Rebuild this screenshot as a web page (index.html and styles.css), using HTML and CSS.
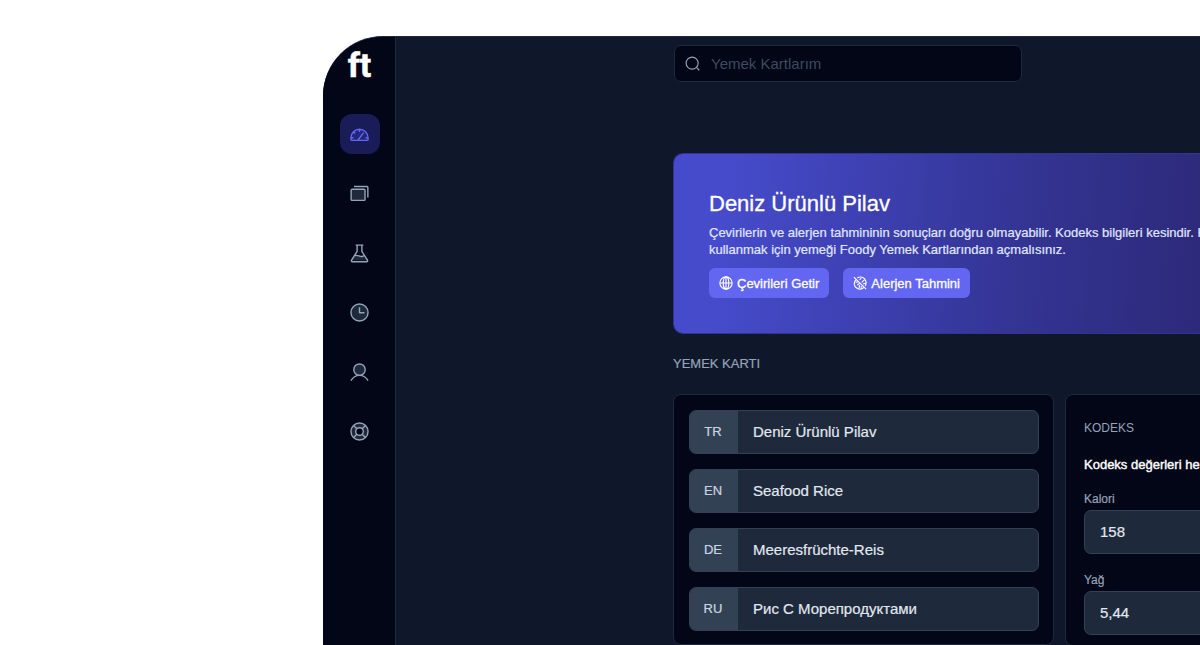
FILE: index.html
```html
<!DOCTYPE html>
<html lang="tr">
<head>
<meta charset="utf-8">
<meta name="viewport" content="width=device-width, initial-scale=1">
<title>Yemek Kartı</title>
<link rel="stylesheet" href="styles.css">
</head>
<body>
<div class="app">
  <aside class="sidebar">
    <a class="logo" href="#">ft</a>
    <nav class="nav">
      <a class="nav-item active" href="#" aria-label="Panel"><svg viewBox="0 0 20 20"><path class="tint" d="M1 16.2v-2.7a9 9 0 0 1 18 0v2.7z"/><path d="M2 16.2h16c.6 0 1-.4 1-1v-1.700a9 9 0 0 0-18 0v1.700c0 .6.4 1 1 1zM8.300 16l6-8M10 4.600v2.800M3.900 7.500l1.500 1.500M1.500 13.500h2.200M16.300 13.500h2.200"/></svg></a>
      <a class="nav-item" href="#" aria-label="Kartlar"><svg viewBox="0 0 20 20"><rect class="tint" x="1.2" y="5.500" width="14.600" height="11.700" rx="1"/><path d="M4.200 2.600h13.600c.6 0 1 .4 1 1v10.500"/></svg></a>
      <a class="nav-item" href="#" aria-label="Laboratuvar"><svg viewBox="0 0 20 20"><path class="fill" d="M5.500 12.300c3-1.200 5 2 8.300.3l3.500 4.600H2.500z"/><path d="M6 1.200h8M7.500 1.200v6.600L1.600 17.100c-.4.700 0 1.500.8 1.500h15.200c.8 0 1.200-.8.800-1.500L12.500 7.800V1.200M5 12.200c3.200-1.300 6 2.300 9.500.4"/></svg></a>
      <a class="nav-item" href="#" aria-label="Geçmiş"><svg viewBox="0 0 20 20"><circle class="tint" cx="10" cy="10" r="9"/><path d="M10 4.500v5.700h5.200"/></svg></a>
      <a class="nav-item" href="#" aria-label="Profil"><svg viewBox="0 0 20 20"><circle class="tint" cx="10" cy="7" r="6"/><path d="M1 18.500c2-3.500 5.300-5.500 9-5.500s7 2 9 5.500"/></svg></a>
      <a class="nav-item" href="#" aria-label="Destek"><svg viewBox="0 0 20 20"><circle class="tint" cx="10" cy="10" r="9"/><circle class="hole" cx="10" cy="10" r="4"/><path d="M3.700 3.700l3.500 3.500M12.800 12.800l3.500 3.500M16.300 3.700l-3.500 3.500M7.200 12.800l-3.500 3.500"/></svg></a>
    </nav>
  </aside>
  <main class="main">
    <label class="search">
      <svg viewBox="0 0 20 20" aria-hidden="true"><circle cx="9.500" cy="9.500" r="8"/><path d="M15.300 15.300l3.700 3.700"/></svg>
      <input type="search" placeholder="Yemek Kartlarım" aria-label="Yemek Kartlarım">
    </label>
    <section class="banner">
      <h1>Deniz Ürünlü Pilav</h1>
      <p>Çevirilerin ve alerjen tahmininin sonuçları doğru olmayabilir. Kodeks bilgileri kesindir. K<br>kullanmak için yemeği Foody Yemek Kartlarından açmalısınız.</p>
      <div class="actions">
        <button type="button"><svg viewBox="0 0 16 16" aria-hidden="true"><circle cx="8" cy="8" r="7"/><ellipse cx="8" cy="8" rx="3.200" ry="7"/><path d="M1 8h14M8 1v14"/></svg>Çevirileri Getir</button>
        <button type="button"><svg viewBox="0 0 16 16" aria-hidden="true"><path d="M1 1.300l14 13.700M3.700 4C.4 7 .8 11.700 4.200 13.800c2.500 1.600 6 1.400 8.500-.9M4.800 2.300C8.500 0 13.200 1.300 14.700 6c.5 2 .3 3.700-.7 5.500M3 7.500l2.500-1M4.800 10.500l2.700-2.300M7.200 13.800V10M7.500 4.500l2-2.200M10 7.300l3-2.800M11.500 9.200l2.700-.9M9.500 13.500v-2"/></svg>Alerjen Tahmini</button>
      </div>
    </section>
    <h2 class="heading">YEMEK KARTI</h2>
    <div class="panels">
      <section class="panel names">
        <div class="row"><label for="tr">TR</label><input id="tr" value="Deniz Ürünlü Pilav"></div>
        <div class="row"><label for="en">EN</label><input id="en" value="Seafood Rice"></div>
        <div class="row"><label for="de">DE</label><input id="de" value="Meeresfrüchte-Reis"></div>
        <div class="row"><label for="ru">RU</label><input id="ru" value="Рис С Морепродуктами"></div>
      </section>
      <section class="panel codex">
        <h3>KODEKS</h3>
        <p class="note">Kodeks değerleri her</p>
        <div class="field"><label for="kcal">Kalori</label><input id="kcal" value="158"></div>
        <div class="field"><label for="fat">Yağ</label><input id="fat" value="5,44"></div>
      </section>
    </div>
  </main>
</div>
</body>
</html>
```
FILE: styles.css
```css
* { box-sizing: border-box; }
body {
  margin: 0;
  height: 100vh;
  overflow: hidden;
  padding: 36px 0 0 323px;
  background: #fff;
  font-family: "Liberation Sans", Arial, sans-serif;
  color: #e2e8f0;
}
h1, h2, h3, p { margin: 0; font-weight: 400; }
svg { fill: none; stroke: currentColor; stroke-width: 1.5; stroke-linejoin: round; flex: none; }
input, button { font: inherit; color: inherit; min-width: 0; }
.app {
  display: flex;
  height: 100%;
  overflow: hidden;
  background: #0f172a;
  border-top: 1px solid #1e293b;
  border-top-left-radius: 60px;
}
.sidebar {
  flex: none;
  width: 73px;
  display: flex;
  flex-direction: column;
  align-items: center;
  padding-left: 1px;
  background: #020617;
  border-right: 1px solid #1e293b;
}
.logo {
  margin-top: 8px;
  height: 40px;
  font: 700 34px/40px Roboto, sans-serif;
  color: #fff;
  text-decoration: none;
  -webkit-text-stroke: 0.5px;
}
.nav {
  margin-top: 29px;
  height: 338px;
  display: flex;
  flex-direction: column;
  justify-content: space-between;
}
.nav-item {
  width: 40px;
  height: 40px;
  display: grid;
  place-items: center;
  border-radius: 12px;
  color: #94a3b8;
}
.nav-item svg { width: 19px; height: 19px; }
.tint { fill: #1e293b; }
.fill { fill: #1e293b; stroke: none; }
.hole { fill: #020617; }
.active { background: #1a1c58; color: #6366f1; }
.active .tint { fill: #24267a; stroke: none; }
.main { flex: 1; min-width: 0; padding: 8px 0 0 277px; }
.search {
  width: 348px;
  height: 37px;
  margin-left: 1px;
  padding: 0 10px;
  display: flex;
  align-items: center;
  gap: 11px;
  background: #020617;
  border: 1px solid #1e293b;
  border-radius: 7px;
  color: #94a3b8;
}
.search svg { width: 15px; height: 15px; }
.search input {
  flex: 1;
  padding: 0;
  border: 0;
  outline: 0;
  background: none;
  font-size: 15px;
}
.search input::placeholder { color: #3d4a5f; opacity: 1; }
.banner {
  margin: 71px 0 0;
  height: 181px;
  padding: 36px 0 0 35px;
  white-space: nowrap;
  border: 1px solid #33348f;
  border-right: 0;
  border-radius: 10px 0 0 10px;
  background: linear-gradient(95deg, #464bcb 0%, #464bcb 10%, #333391 68%, #2d2a7a 100%);
}
.banner h1 { font-size: 22px; line-height: 28px; color: #fff; -webkit-text-stroke: 0.3px; }
.banner p { margin-top: 6px; font-size: 13px; line-height: 17px; color: #e0e7ff; -webkit-text-stroke: 0.2px; }
.actions { display: flex; gap: 14px; margin-top: 10px; }
.actions button {
  height: 30px;
  padding: 0 10px;
  display: flex;
  align-items: center;
  gap: 4px;
  border: 0;
  border-radius: 6px;
  background: #6366f1;
  color: #fff;
  font-size: 13px;
  -webkit-text-stroke: 0.3px;
}
.actions svg { width: 14px; height: 14px; stroke-width: 1.3; }
.heading { margin-top: 21px; font-size: 13px; line-height: 18px; color: #94a3b8; -webkit-text-stroke: 0.2px; }
.panels { display: flex; gap: 11px; margin-top: 21px; align-items: flex-start; }
.panel { flex: none; background: #020617; border: 1px solid #1e293b; border-radius: 8px; }
.names {
  width: 381px;
  padding: 15px 14px 13px 15px;
  display: flex;
  flex-direction: column;
  gap: 15px;
}
.row, .field input {
  height: 44px;
  background: #1e293b;
  border: 1px solid #334155;
  border-radius: 7px;
}
.row { display: flex; overflow: hidden; }
.row label {
  width: 48px;
  padding: 0 2px 2px 0;
  display: grid;
  place-items: center;
  background: #334155;
  font-size: 13px;
  color: #cbd5e1;
  -webkit-text-stroke: 0.2px;
}
.row input {
  flex: 1;
  padding: 0 15px 2px;
  border: 0;
  background: none;
  font-size: 15px;
  -webkit-text-stroke: 0.2px;
}
.codex { width: 381px; padding: 24px 18px 10px; }
.codex h3 { font-size: 12px; line-height: 18px; color: #94a3b8; }
.note { margin-top: 19px; font-size: 13px; line-height: 18px; color: #fff; white-space: nowrap; -webkit-text-stroke: 0.4px; }
.field { margin-top: 17px; display: flex; flex-direction: column; gap: 2px; }
.field + .field { margin-top: 18px; }
.field label { font-size: 12px; line-height: 17px; color: #94a3b8; -webkit-text-stroke: 0.2px; }
.field input { width: 100%; padding: 0 15px 2px; font-size: 15px; -webkit-text-stroke: 0.2px; }
```
